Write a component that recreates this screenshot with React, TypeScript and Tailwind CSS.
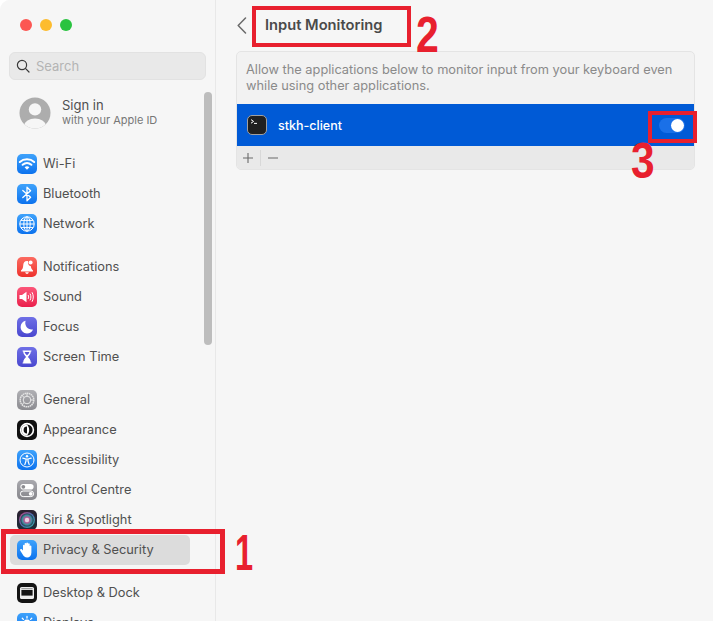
import React from "react";

const W = "#ffffff";

const Ic = ({ bg, children }: { bg: string; children?: React.ReactNode }) => (
  <span className={`flex h-5 w-5 shrink-0 items-center justify-center overflow-hidden rounded-[5px] ${bg}`}>
    <svg viewBox="0 0 20 20" width="20" height="20" fill="none">{children}</svg>
  </span>
);

const BLUE = "bg-gradient-to-b from-[#3ea2fb] to-[#0a72ee]";

const icons: Record<string, React.ReactNode> = {
  "Wi-Fi": (
    <Ic bg={BLUE}>
      <g stroke={W} strokeWidth="2" strokeLinecap="round">
        <path d="M2.8 8C6.8 4.4 13.2 4.4 17.2 8" />
        <path d="M5.6 10.8C8.2 8.6 11.8 8.6 14.4 10.8" />
      </g>
      <path d="M7.6 13.2C9 12 11 12 12.4 13.2L10 15.8Z" fill={W} />
    </Ic>
  ),
  Bluetooth: (
    <Ic bg={BLUE}>
      <path d="M5.8 6.4L13.6 13.2L10 16.8V3.2L13.6 6.8L5.8 13.6" stroke={W} strokeWidth="1.3" strokeLinejoin="round" strokeLinecap="round" />
    </Ic>
  ),
  Network: (
    <Ic bg={BLUE}>
      <g stroke={W} strokeWidth="1">
        <circle cx="10" cy="10" r="7.2" />
        <ellipse cx="10" cy="10" rx="3.2" ry="7.2" />
        <path d="M10 2.8V17.2M2.8 10H17.2M4 6.4H16M4 13.6H16" />
      </g>
    </Ic>
  ),
  Notifications: (
    <Ic bg="bg-gradient-to-b from-[#fb6a60] to-[#ee2f2c]">
      <path d="M10 4C7.4 4 6.3 6 6.2 8.4C6.1 10.8 5.5 12 4 13.4V14.4H16V13.4C14.6 12.2 14 11 13.9 9.2C12 9 10.8 7.4 11.1 4.2C10.8 4.1 10.4 4 10 4Z" fill={W} />
      <circle cx="13.6" cy="5.6" r="2" fill={W} />
      <path d="M8.2 15.3H11.8C11.5 16.4 10.8 17 10 17S8.5 16.4 8.2 15.3Z" fill={W} />
    </Ic>
  ),
  Sound: (
    <Ic bg="bg-gradient-to-b from-[#fb5579] to-[#ea1c4c]">
      <path d="M2.5 8H5L9.5 4.8V15.2L5 12H2.5Z" fill={W} />
      <g stroke={W} strokeWidth="1" strokeLinecap="round">
        <path d="M11.3 8.4C11.8 9.4 11.8 10.6 11.3 11.6" />
        <path d="M13.2 7C14.2 8.9 14.2 11.1 13.2 13" />
        <path d="M15.2 5.6C16.7 8.4 16.7 11.6 15.2 14.4" />
      </g>
    </Ic>
  ),
  Focus: (
    <Ic bg="bg-gradient-to-b from-[#6f6fe6] to-[#4a47cf]">
      <path d="M8.6 3.8C5.6 4.4 3.6 7 3.6 10C3.6 13.6 6.4 16.4 10 16.4C12.7 16.4 15 14.8 16 12.4C11.5 13.6 7 9 8.6 3.8Z" fill={W} />
    </Ic>
  ),
  "Screen Time": (
    <Ic bg="bg-gradient-to-b from-[#6f6fe6] to-[#4a47cf]">
      <path d="M5.6 3.4H14.4V4.6H13.8C13.8 7 12.2 8.6 10.9 10C12.2 11.4 13.8 13 13.8 15.4H14.4V16.6H5.6V15.4H6.2C6.2 13 7.8 11.4 9.1 10C7.8 8.6 6.2 7 6.2 4.6H5.6Z" fill={W} />
      <path d="M7.6 5H12.4C12.2 6.2 11.2 7.2 10 8.2C8.8 7.2 7.8 6.2 7.6 5Z" fill="#5a58d8" />
    </Ic>
  ),
  General: (
    <Ic bg="bg-gradient-to-b from-[#b0b0b4] to-[#8c8c91]">
      <circle cx="10" cy="10" r="6.8" stroke="#e4e4e4" strokeWidth="1.5" strokeDasharray="1.6 0.5" />
      <circle cx="10" cy="10" r="3.8" stroke="#e8e8e8" strokeWidth="1" />
      <path d="M10 3.4V6.2M16.4 10H13.8M5 5.4L7.3 7.6M5 14.6L7.3 12.4" stroke="#e8e8e8" strokeWidth="1" />
    </Ic>
  ),
  Appearance: (
    <Ic bg="bg-[#111111]">
      <circle cx="10" cy="10" r="7.2" fill={W} />
      <circle cx="10" cy="10" r="5.6" fill="#111111" />
      <path d="M10 4.4A5.6 5.6 0 0 0 10 15.6C11.5 14 12.2 12 12.2 10C12.2 8 11.5 6 10 4.4Z" fill={W} />
      <path d="M10 6.6A3.4 3.4 0 0 0 10 13.4Z" fill="#111111" />
    </Ic>
  ),
  Accessibility: (
    <Ic bg={BLUE}>
      <circle cx="10" cy="10" r="7" stroke={W} strokeWidth="1" />
      <circle cx="10" cy="6.2" r="1.2" fill={W} />
      <path d="M5.8 8.2L9 9V11L7.8 14.6M14.2 8.2L11 9V11L12.2 14.6M9 9H11" stroke={W} strokeWidth="1.2" strokeLinecap="round" strokeLinejoin="round" />
    </Ic>
  ),
  "Control Centre": (
    <Ic bg="bg-gradient-to-b from-[#a9a9ae] to-[#86868b]">
      <rect x="3.4" y="4" width="13.2" height="5.6" rx="2.8" fill={W} />
      <circle cx="6.3" cy="6.8" r="1.9" fill="#8d8d92" />
      <rect x="3.4" y="11" width="13.2" height="5.6" rx="2.8" stroke={W} strokeWidth="1" />
      <circle cx="13.7" cy="13.8" r="1.9" fill={W} />
    </Ic>
  ),
  "Siri & Spotlight": (
    <Ic bg="bg-gradient-to-b from-[#2b2030] to-[#1d2c38]">
      <defs>
        <radialGradient id="s1" cx="50%" cy="50%" r="50%">
          <stop offset="0%" stopColor="#d9a2cb" />
          <stop offset="40%" stopColor="#b95a97" />
          <stop offset="72%" stopColor="#3b8f9d" />
          <stop offset="100%" stopColor="#23344a" />
        </radialGradient>
        <linearGradient id="s2" x1="0" y1="0" x2="1" y2="1">
          <stop offset="0%" stopColor="#c73f7a" />
          <stop offset="50%" stopColor="#4b6fb0" />
          <stop offset="100%" stopColor="#34b0a0" />
        </linearGradient>
      </defs>
      <circle cx="10" cy="10" r="8" fill="url(#s2)" />
      <circle cx="10" cy="10" r="6.6" fill="url(#s1)" />
      <circle cx="10" cy="10" r="2.2" fill="#e7d3e4" />
    </Ic>
  ),
  "Privacy & Security": (
    <Ic bg={BLUE}>
      <path d="M6 10.6V5.6C6 4.5 7.6 4.5 7.6 5.6V3.8C7.6 2.7 9.3 2.7 9.3 3.8V3.2C9.3 2.1 11 2.1 11 3.2V3.9C11 2.9 12.7 2.9 12.7 3.9V6.2C12.7 5.2 14.4 5.2 14.4 6.2V12.4C14.4 15.6 12.6 17.4 10.2 17.4C7.8 17.4 6.6 16.2 5.4 14L3.2 10.4C2.6 9.3 4.2 8.4 5 9.4Z" fill={W} />
    </Ic>
  ),
  "Desktop & Dock": (
    <Ic bg="bg-[#141414]">
      <rect x="3" y="4" width="14" height="12" rx="1.6" fill="#ededed" />
      <rect x="4.4" y="7" width="11.2" height="5.6" fill="#141414" />
      <rect x="4.4" y="5.2" width="11.2" height="1" fill="#8a8a8a" />
    </Ic>
  ),
  Displays: (
    <Ic bg={BLUE}>
      <circle cx="10" cy="10" r="3.4" fill={W} />
      <path d="M10 3.4V5M10 15V16.6M3.4 10H5M15 10H16.6M5.3 5.3L6.4 6.4M13.6 13.6L14.7 14.7M14.7 5.3L13.6 6.4M6.4 13.6L5.3 14.7" stroke={W} strokeWidth="1.3" strokeLinecap="round" />
    </Ic>
  ),
};

const groups = [
  ["Wi-Fi", "Bluetooth", "Network"],
  ["Notifications", "Sound", "Focus", "Screen Time"],
  ["General", "Appearance", "Accessibility", "Control Centre", "Siri & Spotlight", "Privacy & Security"],
  ["Desktop & Dock", "Displays"],
];

const Row = ({ label }: { label: string }) => (
  <div
    className={`flex h-[30px] items-center gap-[6px] rounded-[5px] pl-[7px] ${
      label === "Privacy & Security" ? "w-[180px] bg-[#dcdcdc]" : ""
    }`}
  >
    {icons[label]}
    <span className="text-[12.8px] leading-none text-[#505050]">{label}</span>
  </div>
);

const Num = ({ className, children }: { className: string; children: string }) => (
  <span
    className={`absolute origin-left font-['Liberation_Sans',sans-serif] text-[50px] leading-none font-bold text-[#e8202e] ${className}`}
  >
    {children}
  </span>
);

export default function App() {
  return (
    <div className="relative h-[621px] w-[713px] overflow-hidden bg-white font-['Inter',sans-serif]">
      <div className="flex h-full overflow-hidden rounded-tl-[10px] bg-[#f6f6f6]">
        {/* Sidebar */}
        <aside className="relative h-full w-[216px] shrink-0 overflow-hidden border-r border-[#e8e8e8] bg-[#f6f6f6]">
          <div className="flex gap-2 pt-[19px] pl-5">
            <span className="h-3 w-3 rounded-full bg-[#fc5753]" />
            <span className="h-3 w-3 rounded-full bg-[#fdbc2e]" />
            <span className="h-3 w-3 rounded-full bg-[#29c33f]" />
          </div>
          <div className="mt-[21px] ml-[9px] flex h-[28px] w-[197px] items-center gap-[6px] rounded-[6px] border border-[#e2e2e2] bg-[#e9e9e9] pl-[6px]">
            <svg width="14" height="14" viewBox="0 0 14 14" fill="none" stroke="#3a3a3a" strokeWidth="1.2" strokeLinecap="round">
              <circle cx="6" cy="6" r="4.6" />
              <path d="M9.4 9.4L13 13" />
            </svg>
            <span className="text-[13px] leading-none text-[#b4b4b4]">Search</span>
          </div>
          <div className="mt-[17px] ml-[19px] flex items-center gap-[11px]">
            <svg width="32" height="32" viewBox="0 0 32 32">
              <defs>
                <clipPath id="av">
                  <circle cx="16" cy="16" r="15.5" />
                </clipPath>
              </defs>
              <circle cx="16" cy="16" r="15.5" fill="#adadad" />
              <g clipPath="url(#av)" fill="#f6f6f6">
                <circle cx="16" cy="12.4" r="6.2" />
                <ellipse cx="16" cy="28" rx="10.5" ry="6.5" />
              </g>
            </svg>
            <div className="-mt-[3px] flex flex-col">
              <span className="text-[13px] leading-[16px] text-[#505050]">Sign in</span>
              <span className="text-[11px] leading-[14px] text-[#777777]">with your Apple ID</span>
            </div>
          </div>
          <div className="mt-[20px] ml-[10px] flex flex-col gap-[13px]">
            {groups.map((g, i) => (
              <div key={i} className="flex flex-col">
                {g.map((l) => (
                  <Row key={l} label={l} />
                ))}
              </div>
            ))}
          </div>
          <div className="absolute top-[92px] left-[204px] h-[253px] w-2 rounded-full bg-[#bdbdbd]" />
        </aside>

        {/* Main */}
        <main className="min-w-0 flex-1 bg-[#f6f6f6] pl-5">
          <div className="flex h-[51px] items-start">
            <svg className="mt-[17px] ml-px" width="10" height="17" viewBox="0 0 10 17" fill="none" stroke="#6a6a6a" strokeWidth="1.5" strokeLinecap="round" strokeLinejoin="round">
              <path d="M8.5 1L1.2 8.5L8.5 16" />
            </svg>
            <span className="mt-[16px] ml-[18px] text-[14.7px] leading-[18px] font-semibold text-[#4a4a4a]">Input Monitoring</span>
          </div>
          <div className="w-[459px] overflow-hidden rounded-[5px] border border-[#e4e4e4] bg-[#f2f2f2]">
            <p className="h-[52px] pt-[10px] pr-[10px] pl-[9px] text-[12.8px] leading-4 text-[#8a8a8a]">
              Allow the applications below to monitor input from your keyboard even while using other applications.
            </p>
            <div className="flex h-[42px] items-center bg-[#005ad6] pl-[10px]">
              <span className="flex h-[20px] w-[20px] items-center justify-center rounded-[5px] border border-[#a0a0a0] bg-[#202020]">
                <svg width="18" height="18" viewBox="0 0 18 18" fill="none" stroke="#fff" strokeWidth="1">
                  <path d="M3 3.6L5.6 5.4L3 7.2M6 7.4H9" />
                </svg>
              </span>
              <span className="mt-[2px] ml-[11px] text-[12.5px] font-medium text-white">stkh-client</span>
              <span className="mr-[9px] ml-auto flex h-[15px] w-[26px] items-center justify-end rounded-full bg-[#1a70e8] pr-px">
                <span className="h-[13px] w-[13px] rounded-full bg-white" />
              </span>
            </div>
            <div className="flex h-[23px] items-center bg-[#e9e9e9] text-[#6a6a6a]">
              <svg className="ml-[6px]" width="10" height="10" viewBox="0 0 10 10" stroke="#6a6a6a" strokeWidth="1.1">
                <path d="M5 0V10M0 5H10" />
              </svg>
              <span className="ml-[7px] h-4 w-px bg-[#d8d8d8]" />
              <svg className="ml-[7px]" width="10" height="10" viewBox="0 0 10 10" stroke="#6a6a6a" strokeWidth="1.1">
                <path d="M0 5H10" />
              </svg>
            </div>
          </div>
        </main>
      </div>

      {/* Annotations */}
      <div className="absolute top-[529px] left-px h-[45px] w-[224px] border-[5px] border-[#e8202e]" />
      <div className="absolute top-[6px] left-[252px] h-[41px] w-[159px] border-[4px] border-[#e8202e]" />
      <div className="absolute top-[111px] left-[648px] h-[32px] w-[49px] border-[4px] border-[#e8202e]" />
      <Num className="top-[528px] left-[235px] scale-x-[0.65]">1</Num>
      <Num className="top-[10px] left-[416px] scale-x-[0.82]">2</Num>
      <Num className="top-[136px] left-[631px] scale-x-[0.85]">3</Num>
    </div>
  );
}
